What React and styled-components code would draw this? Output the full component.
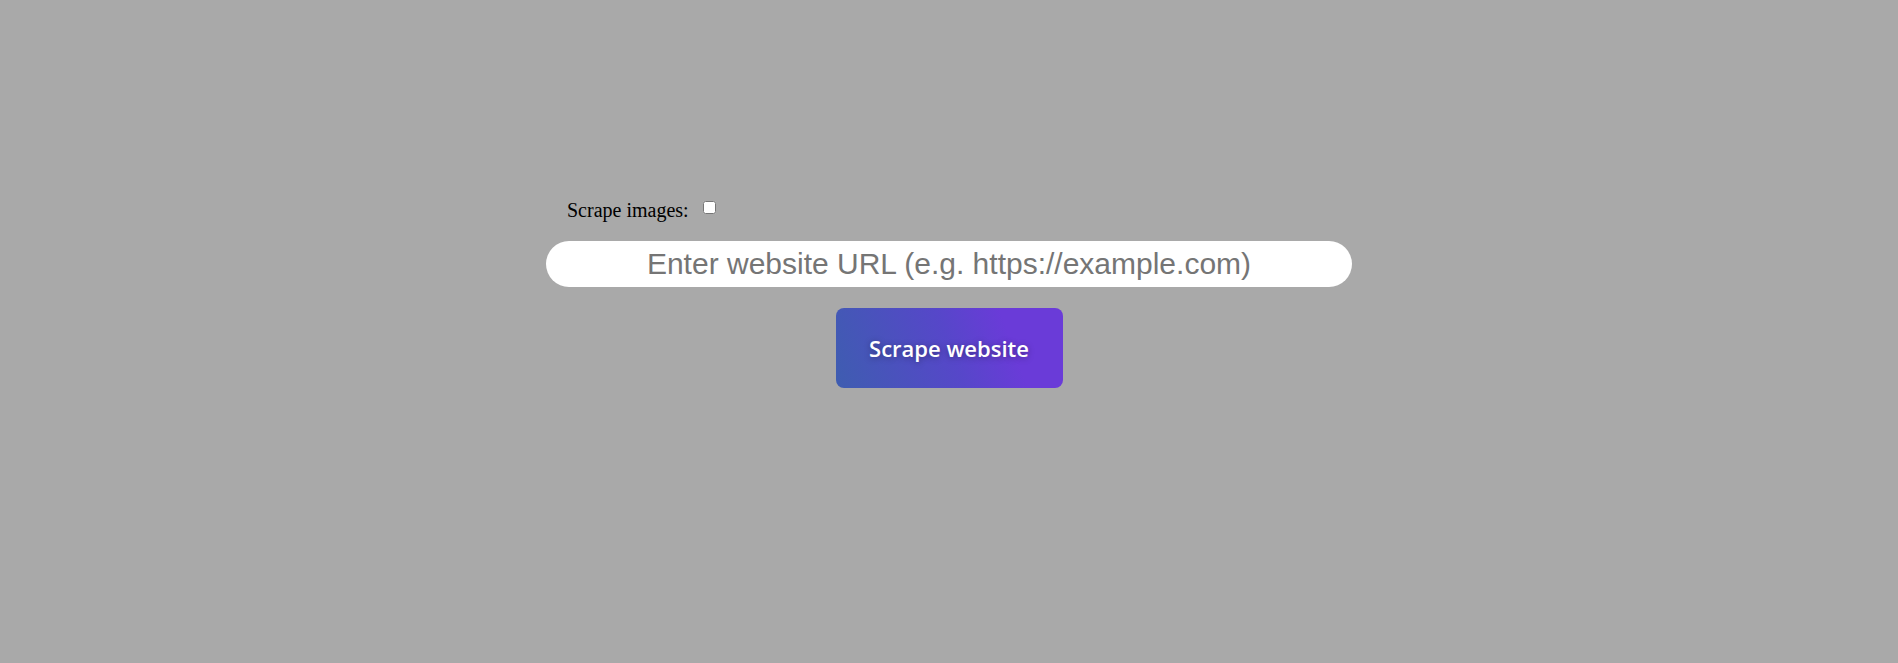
import { createGlobalStyle, styled } from "styled-components";

const GlobalStyle = createGlobalStyle`
  html, body {
    margin: 0;
    padding: 0;
    background: #a9a9a9;
  }
`;

const Page = styled.div`
  width: 100vw;
  height: 100vh;
  display: flex;
  justify-content: center;
  padding-top: 201px;
  box-sizing: border-box;
`;

const Form = styled.form`
  width: 806px;
  display: flex;
  flex-direction: column;
  align-items: center;
`;

const OptionRow = styled.label`
  align-self: flex-start;
  display: flex;
  align-items: flex-start;
  margin-left: 21px;
  font-family: "Liberation Serif", "Times New Roman", serif;
  font-size: 20px;
  line-height: 18px;
  color: #000;
`;

const Checkbox = styled.input`
  width: 13px;
  height: 13px;
  margin: 0 0 0 14px;
`;

const UrlInput = styled.input`
  width: 100%;
  height: 46px;
  margin-top: 22px;
  padding: 0;
  box-sizing: border-box;
  border: none;
  border-radius: 23px;
  background: #fff;
  outline: none;
  text-align: center;
  font-family: "Liberation Sans", Arial, sans-serif;
  font-size: 30px;
  color: #333;

  &::placeholder {
    color: #757575;
  }
`;

const Button = styled.button`
  margin-top: 21px;
  width: 227px;
  height: 80px;
  border: none;
  border-radius: 8px;
  background: linear-gradient(70deg, #3e5db0 0%, #5647c9 50%, #6a3bd8 75%, #6a3bd8 100%);
  color: #fff;
  font-family: "Open Sans", "Noto Sans", sans-serif;
  font-weight: 600;
  font-size: 22px;
  text-shadow: 0 1px 6px rgba(0, 0, 0, 0.35);
  cursor: pointer;
`;

export default function App() {
  return (
    <>
      <GlobalStyle />
      <Page>
        <Form onSubmit={(e) => e.preventDefault()}>
          <OptionRow>
            Scrape images:
            <Checkbox type="checkbox" />
          </OptionRow>
          <UrlInput
            type="text"
            placeholder="Enter website URL (e.g. https://example.com)"
          />
          <Button type="submit">Scrape website</Button>
        </Form>
      </Page>
    </>
  );
}
